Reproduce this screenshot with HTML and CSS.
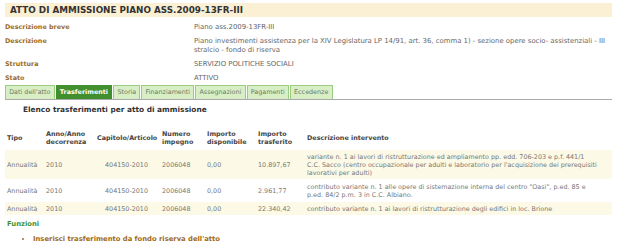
FILE: index.html
```html
<!DOCTYPE html>
<html lang="it">
<head>
  <meta charset="UTF-8" />
  <title>Atto di ammissione</title>
  <link rel="stylesheet" href="styles.css">
</head>
<body>
  <h1 class="titolo">ATTO DI AMMISSIONE PIANO ASS.2009-13FR-III</h1>

  <div class="dettaglio">
    <div class="riga">
      <span class="etichetta">Descrizione breve</span>
      <span class="valore">Piano ass.2009-13FR-III</span>
    </div>
    <div class="riga">
      <span class="etichetta">Descrizione</span>
      <span class="valore">Piano investimenti assistenza per la XIV Legislatura LP 14/91, art. 36, comma 1) - sezione opere socio- assistenziali - III stralcio - fondo di riserva</span>
    </div>
    <div class="riga">
      <span class="etichetta">Struttura</span>
      <span class="valore">SERVIZIO POLITICHE SOCIALI</span>
    </div>
    <div class="riga">
      <span class="etichetta">Stato</span>
      <span class="valore">ATTIVO</span>
    </div>
  </div>

  <ul class="schede">
    <li><a href="#">Dati dell'atto</a></li>
    <li class="attiva"><a href="#">Trasferimenti</a></li>
    <li><a href="#">Storia</a></li>
    <li><a href="#">Finanziamenti</a></li>
    <li><a href="#">Assegnazioni</a></li>
    <li><a href="#">Pagamenti</a></li>
    <li><a href="#">Eccedenze</a></li>
  </ul>

  <h2 class="sottotitolo">Elenco trasferimenti per atto di ammissione</h2>

  <table class="elenco">
    <colgroup>
      <col class="c-tipo">
      <col class="c-anno">
      <col class="c-cap">
      <col class="c-num">
      <col class="c-disp">
      <col class="c-trasf">
      <col class="c-desc">
    </colgroup>
    <thead>
      <tr>
        <th>Tipo</th>
        <th>Anno/Anno decorrenza</th>
        <th>Capitolo/Articolo</th>
        <th>Numero impegno</th>
        <th>Importo disponibile</th>
        <th>Importo trasferito</th>
        <th>Descrizione intervento</th>
      </tr>
    </thead>
    <tbody>
      <tr class="pari">
        <td>Annualità</td>
        <td>2010</td>
        <td class="cap">404150-2010</td>
        <td>2006048</td>
        <td>0,00</td>
        <td>10.897,67</td>
        <td class="desc">variante n. 1 ai lavori di ristrutturazione ed ampliamento pp. edd. 706-203 e p.f. 441/1 C.C. Sacco (centro occupazionale per adulti e laboratorio per l'acquisizione dei prerequisiti lavorativi per adulti)</td>
      </tr>
      <tr>
        <td>Annualità</td>
        <td>2010</td>
        <td class="cap">404150-2010</td>
        <td>2006048</td>
        <td>0,00</td>
        <td>2.961,77</td>
        <td class="desc">contributo variante n. 1 alle opere di sistemazione interna del centro "Oasi", p.ed. 85 e p.ed. 84/2 p.m. 3 in C.C. Albiano.</td>
      </tr>
      <tr class="pari">
        <td>Annualità</td>
        <td>2010</td>
        <td class="cap">404150-2010</td>
        <td>2006048</td>
        <td>0,00</td>
        <td>22.340,42</td>
        <td class="desc">contributo variante n. 1 ai lavori di ristrutturazione degli edifici in loc. Brione</td>
      </tr>
    </tbody>
  </table>

  <h3 class="funzioni">Funzioni</h3>
  <ul class="azioni">
    <li><a href="#">Inserisci trasferimento da fondo riserva dell'atto</a></li>
  </ul>
</body>
</html>
```

FILE: styles.css
```css
body {
  font-family: "DejaVu Sans", Verdana, sans-serif;
  font-size: 6.4px;
  color: #666;
  margin: 3px 13px 0 5px;
  background: #fff;
}

.titolo {
  margin: 0;
  padding: 0 5px;
  height: 14px;
  line-height: 14px;
  font-size: 8.8px;
  font-weight: bold;
  color: #333;
  background: #fbf0d3;
}

.dettaglio {
  margin-top: 3px;
  margin-right: -12px;
}

.riga {
  display: grid;
  grid-template-columns: 189px 1fr;
  padding: 2.5px 0;
  line-height: 9px;
}

.etichetta {
  font-weight: bold;
  color: #9a6a26;
}

.valore {
  font-size: 6.9px;
  color: #666;
}

.schede {
  display: flex;
  list-style: none;
  margin: 0;
  padding: 0;
  border-bottom: 1px solid #a9a9a9;
  height: 14px;
}

.schede li {
  border: 1px solid #9ccb83;
  border-bottom: none;
  background: #d8efc6;
  margin-right: 1px;
}

.schede a {
  display: block;
  padding: 0 3.2px;
  line-height: 13px;
  color: #6a7a66;
  text-decoration: none;
}

.schede .attiva {
  background: #428f2e;
  border-color: #428f2e;
}

.schede .attiva a {
  color: #fff;
  font-weight: bold;
}

.sottotitolo {
  margin: 5px 0 0 18px;
  font-size: 7.4px;
  line-height: 9px;
  color: #333;
}

.elenco {
  width: 607px;
  border-collapse: separate;
  border-spacing: 0 1px;
  margin-top: 15px;
  table-layout: fixed;
}

.c-tipo { width: 39px; }
.c-anno { width: 51px; }
.c-cap { width: 65px; }
.c-num { width: 45px; }
.c-disp { width: 51px; }
.c-trasf { width: 49px; }

.elenco th {
  text-align: left;
  font-weight: bold;
  color: #444;
  line-height: 8px;
  padding: 0 2px 3px;
  vertical-align: middle;
}

.elenco td {
  line-height: 8px;
  padding: 2.5px 2px;
  color: #777;
  vertical-align: middle;
}

.elenco td.cap {
  padding-left: 10px;
}

.elenco td.desc {
  padding-right: 14.5px;
}

.elenco .pari td {
  background: #fcfae6;
}

.funzioni {
  margin: 4px 0 0 2px;
  font-size: 6.8px;
  color: #3f8f2e;
}

.azioni {
  margin: 7px 0 0;
  padding-left: 28px;
  list-style: disc;
  color: #a07020;
}

.azioni a {
  font-size: 6.8px;
  font-weight: bold;
  color: #a06a1a;
  text-decoration: none;
}
```
